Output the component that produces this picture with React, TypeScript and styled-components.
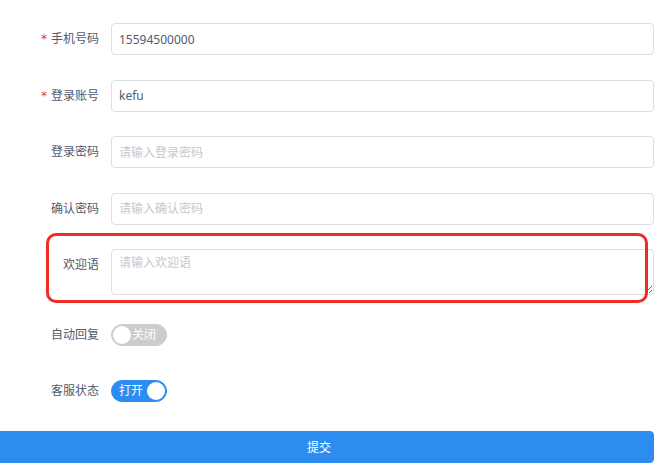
import React, { useState } from "react";
import styled, { createGlobalStyle } from "styled-components";

const Global = createGlobalStyle`
  html, body { margin: 0; padding: 0; background: #fff; }
  body {
    font-family: "Noto Sans", "Noto Sans CJK SC", sans-serif;
    font-size: 12px;
    color: #515a6e;
    overflow: hidden;
  }
  * { box-sizing: border-box; }
`;

const Form = styled.form`
  width: 654px;
  padding-top: 23px;
`;

const Item = styled.div<{ $gap?: number }>`
  position: relative;
  display: flex;
  align-items: flex-start;
  margin-bottom: ${(p) => p.$gap ?? 24}px;
`;

const Label = styled.label<{ $required?: boolean }>`
  width: 111px;
  flex: none;
  text-align: right;
  padding: 10px 12px 10px 0;
  line-height: 1;
  font-size: 12px;
  color: #515a6e;
  &::before {
    content: ${(p) => (p.$required ? '"*"' : "none")};
    display: inline-block;
    margin-right: 4px;
    font-family: "DejaVu Sans", sans-serif;
    font-size: 12px;
    color: #ed4014;
    line-height: 1;
  }
`;

const Content = styled.div`
  flex: 1;
  min-height: 32px;
  display: flex;
  align-items: center;
`;

const Input = styled.input`
  width: 100%;
  height: 32px;
  padding: 4px 7px;
  font-size: 12px;
  font-family: "Noto Sans", "Noto Sans CJK SC", sans-serif;
  color: #515a6e;
  border: 1px solid #dcdee2;
  border-radius: 4px;
  outline: none;
  background: #fff;
  &::placeholder { color: #c5c8ce; }
`;

const TextArea = styled.textarea`
  width: 100%;
  height: 46px;
  padding: 4px 7px;
  font-size: 12px;
  line-height: 1.5;
  font-family: "Noto Sans", "Noto Sans CJK SC", sans-serif;
  color: #515a6e;
  border: 1px solid #dcdee2;
  border-radius: 4px;
  outline: none;
  display: block;
  &::placeholder { color: #c5c8ce; }
`;

const Highlight = styled.div`
  position: absolute;
  left: 46px;
  top: -16px;
  width: 602px;
  height: 70px;
  border: 3px solid #ee2b26;
  border-radius: 10px;
  pointer-events: none;
`;

const SwitchTrack = styled.span<{ $on: boolean }>`
  position: relative;
  display: inline-block;
  width: 56px;
  height: 22px;
  border-radius: 11px;
  background: ${(p) => (p.$on ? "#2d8cf0" : "#ccc")};
  border: 1px solid ${(p) => (p.$on ? "#2d8cf0" : "#ccc")};
  cursor: pointer;
`;

const Knob = styled.span<{ $on: boolean }>`
  position: absolute;
  top: 1px;
  left: ${(p) => (p.$on ? "35px" : "1px")};
  width: 18px;
  height: 18px;
  border-radius: 50%;
  background: #fff;
`;

const SwitchText = styled.span<{ $on: boolean }>`
  position: absolute;
  top: 0;
  left: ${(p) => (p.$on ? "7px" : "20px")};
  line-height: 20px;
  font-size: 12px;
  color: #fff;
`;

const Switch: React.FC<{ on: boolean; onText: string; offText: string; onToggle: () => void }> = ({
  on,
  onText,
  offText,
  onToggle,
}) => (
  <SwitchTrack $on={on} onClick={onToggle}>
    <Knob $on={on} />
    <SwitchText $on={on}>{on ? onText : offText}</SwitchText>
  </SwitchTrack>
);

const SubmitButton = styled.button`
  display: block;
  margin-left: -16px;
  width: 670px;
  height: 32px;
  border: 1px solid #2d8cf0;
  border-radius: 4px;
  background: #2d8cf0;
  color: #fff;
  font-size: 12px;
  font-family: "Noto Sans", "Noto Sans CJK SC", sans-serif;
  cursor: pointer;
`;

export default function App() {
  const [autoReply, setAutoReply] = useState(false);
  const [online, setOnline] = useState(true);
  return (
    <>
      <Global />
      <Form onSubmit={(e) => e.preventDefault()}>
        <Item $gap={24.5}>
          <Label $required>手机号码</Label>
          <Content>
            <Input defaultValue="15594500000" />
          </Content>
        </Item>
        <Item $gap={24.5}>
          <Label $required>登录账号</Label>
          <Content>
            <Input defaultValue="kefu" />
          </Content>
        </Item>
        <Item $gap={24.5}>
          <Label>登录密码</Label>
          <Content>
            <Input type="password" placeholder="请输入登录密码" />
          </Content>
        </Item>
        <Item $gap={24.5}>
          <Label>确认密码</Label>
          <Content>
            <Input type="password" placeholder="请输入确认密码" />
          </Content>
        </Item>
        <Item>
          <Label>欢迎语</Label>
          <Content>
            <TextArea placeholder="请输入欢迎语" />
          </Content>
          <Highlight />
        </Item>
        <Item>
          <Label>自动回复</Label>
          <Content>
            <Switch on={autoReply} onText="打开" offText="关闭" onToggle={() => setAutoReply(!autoReply)} />
          </Content>
        </Item>
        <Item>
          <Label>客服状态</Label>
          <Content>
            <Switch on={online} onText="打开" offText="关闭" onToggle={() => setOnline(!online)} />
          </Content>
        </Item>
        <SubmitButton type="submit">提交</SubmitButton>
      </Form>
    </>
  );
}
